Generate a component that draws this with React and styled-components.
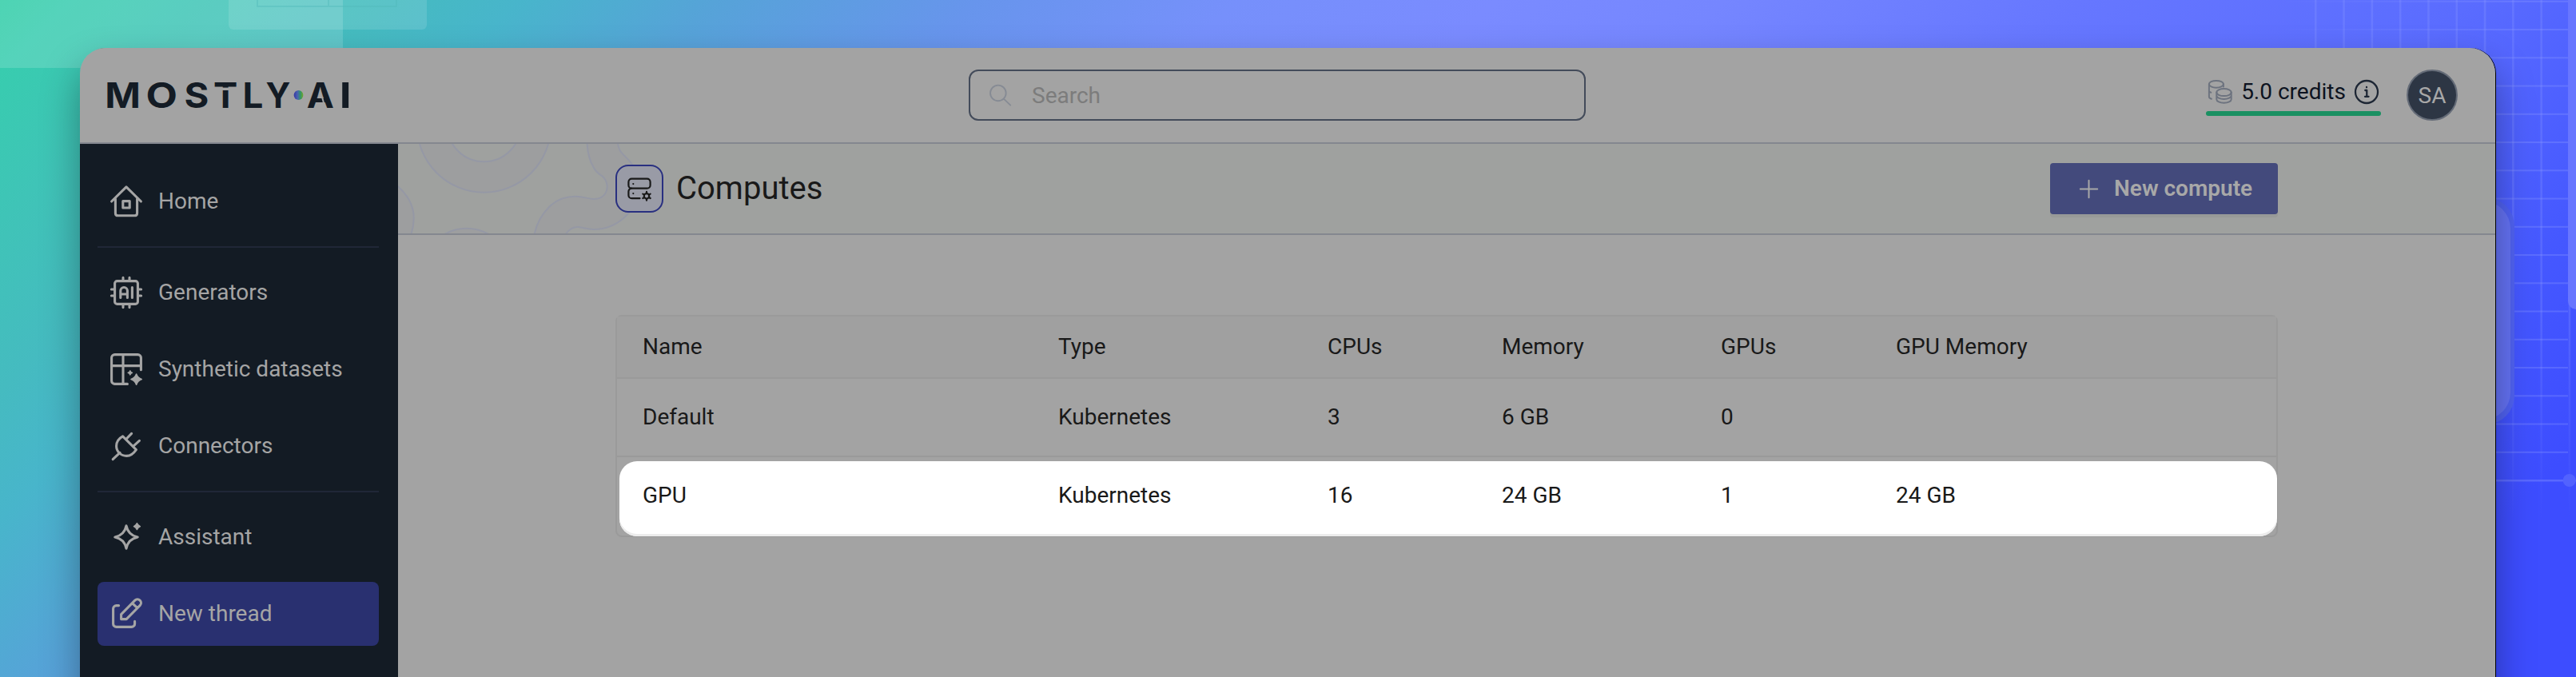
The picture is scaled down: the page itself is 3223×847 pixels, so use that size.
import React from 'react';
import styled, { createGlobalStyle } from 'styled-components';

const Global = createGlobalStyle`
  *, *::before, *::after { box-sizing: border-box; }
  body { margin: 0; font-family: Roboto, "Liberation Sans", sans-serif; font-size: 28px; color: #191919; }
`;

const Desktop = styled.div`
  position: relative;
  height: 847px;
  overflow: hidden;
  padding: 60px 101px 0 100px;
  background: linear-gradient(135deg, #2fcda6 0%, #38ccaf 2.2%, #40c3b8 7.4%, #45bbc0 12%, #48b5cb 16%, #56a3d8 22%, #6795ec 30%, #7690fb 38%, #7a8bff 46%, #7586ff 53%, #6677ff 64%, #5a6cff 76%, #4558ff 86%, #3d4dff 93%);
`;

const Backdrop = styled.svg`
  position: absolute;
  inset: 0;
`;

const WindowShadow = styled.div`
  position: relative;
  border-radius: 32px;
  box-shadow: 0 24px 48px rgba(0, 0, 0, 0.35), 1px 2px 0 -1px #000, 1px 0 0 #000;
`;

const Window = styled.div`
  height: 830px;
  display: flex;
  flex-direction: column;
  border-radius: 32px;
  overflow: hidden;
  background: #a3a3a3;
`;

const Header = styled.header`
  height: 120px;
  flex: none;
  display: flex;
  align-items: center;
  padding: 0 47px 0 32px;
  border-bottom: 2px solid #84878f;
`;

const Logo = styled.svg`
  display: block;
  overflow: visible;
  font-family: Inter, sans-serif;
  font-weight: 700;
  font-size: 44px;
`;

const Search = styled.div`
  width: 772px;
  height: 64px;
  display: flex;
  align-items: center;
  gap: 25px;
  padding-left: 24px;
  border: 2px solid #434b5a;
  border-radius: 12px;
  color: #7c7c7c;
  margin-left: 774px;
`;

const Account = styled.div`
  display: flex;
  align-items: center;
  gap: 32px;
  margin-left: auto;
`;

const Credits = styled.div`
  width: 219px;
  height: 52px;
  display: flex;
  flex-direction: column;
  justify-content: flex-end;
  gap: 8px;
  color: #0d1320;
`;

const CreditsRow = styled.div`
  display: flex;
  justify-content: space-between;
  padding: 0 2px;
  line-height: 32px;
`;

const CreditsBar = styled.div`
  height: 6px;
  border-radius: 3px;
  background: #1a9062;
`;

const Avatar = styled.div`
  width: 64px;
  height: 64px;
  border-radius: 50%;
  border: 2px solid #646b77;
  background: #2d3644;
  color: #a8a8a8;
  display: grid;
  place-items: center;
  line-height: 32px;
  padding-top: 2px;
`;

const Body = styled.div`
  flex: 1;
  display: flex;
`;

const Sidebar = styled.nav`
  width: 398px;
  flex: none;
  display: flex;
  flex-direction: column;
  gap: 16px;
  padding: 32px 24px 0 22px;
  background: #131b24;
`;

const NavItem = styled.a`
  height: 80px;
  flex: none;
  display: flex;
  align-items: center;
  gap: 16px;
  padding: 0 12px;
  border-radius: 8px;
  color: #a5a5a5;
  background: ${(p) => (p.$active ? '#293070' : 'transparent')};
`;

const NavLabel = styled.span`
  padding-bottom: 2px;
`;

const NavDivider = styled.hr`
  width: 100%;
  height: 2px;
  margin: 0;
  border: 0;
  background: #202737;
`;

const Main = styled.main`
  flex: 1;
  min-width: 0;
`;

const TitleBar = styled.div`
  position: relative;
  height: 114px;
  display: flex;
  align-items: center;
  justify-content: space-between;
  padding: 0 272px;
  border-bottom: 2px solid #84878f;
  background: #9fa19f;
`;

const Pattern = styled.svg`
  position: absolute;
  left: 0;
  top: 0;
`;

const Title = styled.h1`
  position: relative;
  margin: 0;
  display: flex;
  align-items: center;
  gap: 16px;
  font-size: 40px;
  font-weight: 400;
  line-height: 48px;
`;

const TitleIcon = styled.span`
  width: 60px;
  height: 60px;
  display: grid;
  place-items: center;
  border: 2px solid #293080;
  border-radius: 16px;
  background: #999ba6;
`;

const NewButton = styled.button`
  width: 285px;
  height: 64px;
  display: flex;
  align-items: center;
  gap: 18px;
  padding: 0 0 0 35px;
  border: 0;
  border-radius: 4px;
  background: #434a7c;
  color: #a8a8a8;
  font: 600 28px Roboto, sans-serif;
  box-shadow: 0 4px 0 #989a98;
`;

const Table = styled.div`
  width: 2080px;
  margin: 100px 0 0 272px;
  border: 2px solid #9a9a9a;
  border-radius: 8px;
`;

const Row = styled.div`
  position: relative;
  height: ${(p) => (p.$head ? '78px' : '98px')};
  display: grid;
  grid-template-columns: 520px 337px 218px 274px 219px 1fr;
  align-items: center;
  padding: 0 0 ${(p) => (p.$last ? '2px' : '0')} 32px;
  background: ${(p) => (p.$head ? '#a0a0a0' : 'transparent')};
  border-bottom: ${(p) => (p.$last ? '0' : '2px solid #9a9a9a')};
`;

const Spotlight = styled.div`
  position: absolute;
  left: 3px;
  right: -1px;
  top: 5px;
  height: 94px;
  border-radius: 22px;
  background: #fff;
  box-shadow: inset 0 -3px 0 #ececec;
`;

const Cell = styled.span`
  position: relative;
  line-height: 36px;
`;

const Icon = ({ size = 48, box = 24, width = 1.55, children, ...rest }) => (
  <svg width={size} height={size} viewBox={`0 0 ${box} ${box}`} fill="none" stroke="currentColor" strokeWidth={width} strokeLinecap="round" strokeLinejoin="round" {...rest}>
    {children}
  </svg>
);

const star = (x, y, r, c) =>
  `M${x} ${y - r}Q${x + c} ${y - c} ${x + r} ${y}Q${x + c} ${y + c} ${x} ${y + r}Q${x - c} ${y + c} ${x - r} ${y}Q${x - c} ${y - c} ${x} ${y - r}z`;

const icons = {
  home: (
    <>
      <path d="M2.8 12 12 2.9 21.2 12" />
      <path d="M5.200 10.500v8.700c0 1 .7 1.700 1.700 1.700h10.200c1 0 1.700-.7 1.700-1.700v-8.700" />
      <rect x="9.9" y="11.800" width="4.2" height="4.2" />
    </>
  ),
  chip: (
    <>
      <rect x="4.8" y="4.8" width="14.4" height="14.4" rx="1.5" />
      <path d="M10 2.700v2M14 2.700v2M10 19.300v2M14 19.300v2M2.700 10h2M2.700 14h2M19.300 10h2M19.300 14h2" />
      <path d="M8.400 15.200v-4.300a2.150 2.150 0 0 1 4.300 0v4.300M8.400 13h4.300M15.700 8.800v6.400" />
    </>
  ),
  table: (
    <>
      <path d="M12.700 21.200H4.800a2 2 0 0 1-2-2V4.800a2 2 0 0 1 2-2h14.400a2 2 0 0 1 2 2v7.600M2.800 9.800h18.400M10 2.800v18.400" />
      <path fill="currentColor" strokeWidth=".8" d={star(18.3, 18.3, 3.3, 0.9)} />
      <path fill="currentColor" strokeWidth=".6" d={star(14.4, 14.2, 1.4, 0.3)} />
    </>
  ),
  plug: (
    <>
      <path d="M3.600 20.300 8 16.200M12.100 7.500l3.200-3.300M16.600 11.900l3.600-3.200" />
      <path d="M9.800 5.900 18.200 14.300C16.500 16.800 14.500 18.200 12.200 18.200 8.600 18.200 5.800 15.400 5.800 12 5.800 9.300 7.400 7.200 9.800 5.900z" />
    </>
  ),
  sparkle: (
    <>
      <path d={star(12, 12, 7.1, 1.2)} />
      <path fill="currentColor" strokeWidth=".7" d={star(18.7, 5.3, 2, 0.6)} />
    </>
  ),
  edit: (
    <>
      <path d="M7.300 6.800H5.800a2 2 0 0 0-2 2v9.400a2 2 0 0 0 2 2h9.500a2 2 0 0 0 2-2v-1.500" />
      <path d="M8.800 15.300v-3l8.600-8.700a2.200 2.200 0 0 1 3.200 3.100l-8.500 8.600zM15.900 5.400l3 2.900" />
    </>
  ),
};

const CoinsIcon = () => (
  <Icon size={32} box={32} width={2} color="#6d737f">
    <ellipse cx="10.900" cy="6.300" rx="9" ry="4.400" />
    <path d="M1.900 6.300V22c0 1.300 1.200 2.200 3 2.800M1.900 14.500c0 .9.900 1.700 2.400 2.200M19.900 6.300v3.200" />
    <ellipse cx="20.500" cy="16.600" rx="9.200" ry="4.500" />
    <path d="M11.300 16.600v8.600c0 2.500 4 4.600 9.200 4.600s9.200-2.100 9.200-4.600v-8.600M11.300 20.600c0 2.400 4 4.400 9.200 4.400s9.200-2 9.200-4.400" />
  </Icon>
);

const ComputeIcon = () => (
  <Icon size={32} box={32} width={2.2}>
    <rect x="2.400" y="3.700" width="27.200" height="12" rx="4" />
    <path d="M6 15.700a3.800 3.800 0 0 0-3.600 4v4.500a4 4 0 0 0 4 4H16.500" />
    <path d="M8.300 10v.1M8.300 22v.1" />
    <circle cx="25" cy="25.300" r="3.200" />
    <path d="M25 21.500v-1.600M25 29.100v1.600M28.300 23.400l1.400-.8M21.700 27.200l-1.400.8M28.300 27.200l1.400.8M21.700 23.400l-1.400-.8" />
  </Icon>
);

// Each letter: character, left offset, horizontal stretch.
const wordmark = [
  ['M', -0.7, 1.09],
  ['O', 50.4, 1.165],
  ['S', 98.5, 1.07],
  ['T', 134.9, 1.03],
  ['L', 171.4, 1.04],
  ['Y', 200.6, 0.96],
  ['A', 251.8, 1.04],
  ['I', 292.7, 1.2],
];

const columns = ['Name', 'Type', 'CPUs', 'Memory', 'GPUs', 'GPU Memory'];
const computes = [
  ['Default', 'Kubernetes', '3', '6 GB', '0', ''],
  ['GPU', 'Kubernetes', '16', '24 GB', '1', '24 GB'],
];

const Nav = ({ icon, label, active }) => (
  <NavItem $active={active}>
    <Icon>{icons[icon]}</Icon>
    <NavLabel>{label}</NavLabel>
  </NavItem>
);

const range = (n) => Array.from({ length: n }, (_, i) => i);

export default function App() {
  return (
    <>
      <Global />
      <Desktop>
        <Backdrop width="3223" height="847">
          <defs>
            <linearGradient id="fadeX" x1="2850" x2="3150" y1="0" y2="0" gradientUnits="userSpaceOnUse">
              <stop offset="0" stopColor="#8f9dff" stopOpacity="0" />
              <stop offset="1" stopColor="#8f9dff" stopOpacity=".3" />
            </linearGradient>
            <linearGradient id="fadeY" x1="0" x2="0" y1="0" y2="650" gradientUnits="userSpaceOnUse">
              <stop offset="0" stopColor="#8f9dff" stopOpacity=".25" />
              <stop offset=".6" stopColor="#8f9dff" stopOpacity=".25" />
              <stop offset="1" stopColor="#8f9dff" stopOpacity="0" />
            </linearGradient>
          </defs>
          <rect x="-10" y="-10" width="439" height="95" fill="#fff" fillOpacity=".15" />
          <rect x="286" y="-10" width="248" height="47" rx="6" fill="#fff" fillOpacity=".12" />
          <path d="M322-2V8H496V-2M411 0v8" fill="none" stroke="#4fb9b8" strokeOpacity=".4" strokeWidth="2" />
          {range(17).map((i) => (
            <rect key={i} x="2860" y={0.8 + i * 35.25} width="353" height="2" fill="url(#fadeX)" />
          ))}
          {range(10).map((i) => (
            <rect key={i} x={2896 + i * 35.3} y="0" width="2.500" height="650" fill="url(#fadeY)" />
          ))}
          <rect x="3110" y="600" width="113" height="2.500" fill="#5a69ff" />
          <circle cx="3214.700" cy="601" r="8" fill="#5262ff" />
          <rect x="3213" y="-20" width="40" height="407" rx="10" fill="#6876ff" />
          <rect x="3040" y="247" width="106" height="284" rx="36" fill="#5062f2" />
          <rect x="3040" y="252" width="101" height="273" rx="34" fill="#6472f4" />
        </Backdrop>
        <WindowShadow>
          <Window>
            <Header>
              <Logo width="306" height="40" viewBox="0 0 306 40" fill="#131b24">
                <defs>
                  <linearGradient id="dot">
                    <stop offset="0" stopColor="#3638a4" />
                    <stop offset=".4" stopColor="#4a63b0" />
                    <stop offset=".7" stopColor="#2f9668" />
                    <stop offset="1" stopColor="#76a626" />
                  </linearGradient>
                </defs>
                {wordmark.map(([ch, x, sx]) => (
                  <text key={ch} transform={`translate(${x} 36) scale(${sx} 1)`}>{ch}</text>
                ))}
                <rect x="134" y="10.600" width="32" height="3.400" fill="#a3a3a3" />
                <path d="M271 22.500 273.400 31" stroke="#a3a3a3" strokeWidth="2" />
                <circle cx="241.500" cy="20" r="5.900" fill="url(#dot)" />
              </Logo>
              <Search>
                <Icon size={28} width={1.6} color="#868b94"><circle cx="9.300" cy="9.800" r="8.400" /><path d="M15.500 16.200l7 6.600" /></Icon>
                Search
              </Search>
              <Account>
                <Credits>
                  <CreditsRow>
                    <CoinsIcon />
                    5.0 credits
                    <Icon size={32} width={1.7} color="#1d2634"><circle cx="12" cy="12" r="10.500" /><path d="M10.700 10.500H12.200v5.800M10.500 16.400h3.400M12 7.500v.2" /></Icon>
                  </CreditsRow>
                  <CreditsBar />
                </Credits>
                <Avatar>SA</Avatar>
              </Account>
            </Header>
            <Body>
              <Sidebar>
                <Nav icon="home" label="Home" />
                <NavDivider />
                <Nav icon="chip" label="Generators" />
                <Nav icon="table" label="Synthetic datasets" />
                <Nav icon="plug" label="Connectors" />
                <NavDivider />
                <Nav icon="sparkle" label="Assistant" />
                <Nav icon="edit" label="New thread" active />
              </Sidebar>
              <Main>
                <TitleBar>
                  <Pattern width="330" height="112" fill="#9d9e9f" stroke="#9598a5" strokeWidth="2">
                    <circle cx="107.500" cy="-23" r="83.700" />
                    <circle cx="107.500" cy="-23.800" r="46.100" fill="#9fa19f" />
                    <path d="M-4 50C12 62 20 78 19.700 93 19.700 100 18.500 107 16 114H-4z" />
                    <path d="M57 114C74 103 97 103 115 114" />
                    <path d="M236.400-2C237 10 240 22 245 30 249 38 254 38 257.700 42.500 261 47 262 52 261.500 56 260 64 254 69 245 69 238 69 232 65.500 221 65.700 209 66 198 70 189.700 78.300 179 89 173 100 170.500 114H209C213 108 218 104 224.500 104 230 104 236 107 245 107 255 107 262 105 269 101.700 277 98 283 93 288.600 86.700 306 70 306 50 293 25.700 287 17 281 14 277.500 8 276 4 275 2 274.700-2z" />
                  </Pattern>
                  <Title>
                    <TitleIcon><ComputeIcon /></TitleIcon>
                    Computes
                  </Title>
                  <NewButton>
                    <Icon size={27} width={1.8}><path d="M12 2.500v19M2.500 12h19" /></Icon>
                    <NavLabel>New compute</NavLabel>
                  </NewButton>
                </TitleBar>
                <Table>
                  <Row $head>{columns.map((c) => <Cell key={c}>{c}</Cell>)}</Row>
                  {computes.map((r, i) => (
                    <Row key={r[0]} $last={i === computes.length - 1}>
                      {i === computes.length - 1 && <Spotlight />}
                      {r.map((c, j) => <Cell key={j}>{c}</Cell>)}
                    </Row>
                  ))}
                </Table>
              </Main>
            </Body>
          </Window>
        </WindowShadow>
      </Desktop>
    </>
  );
}
